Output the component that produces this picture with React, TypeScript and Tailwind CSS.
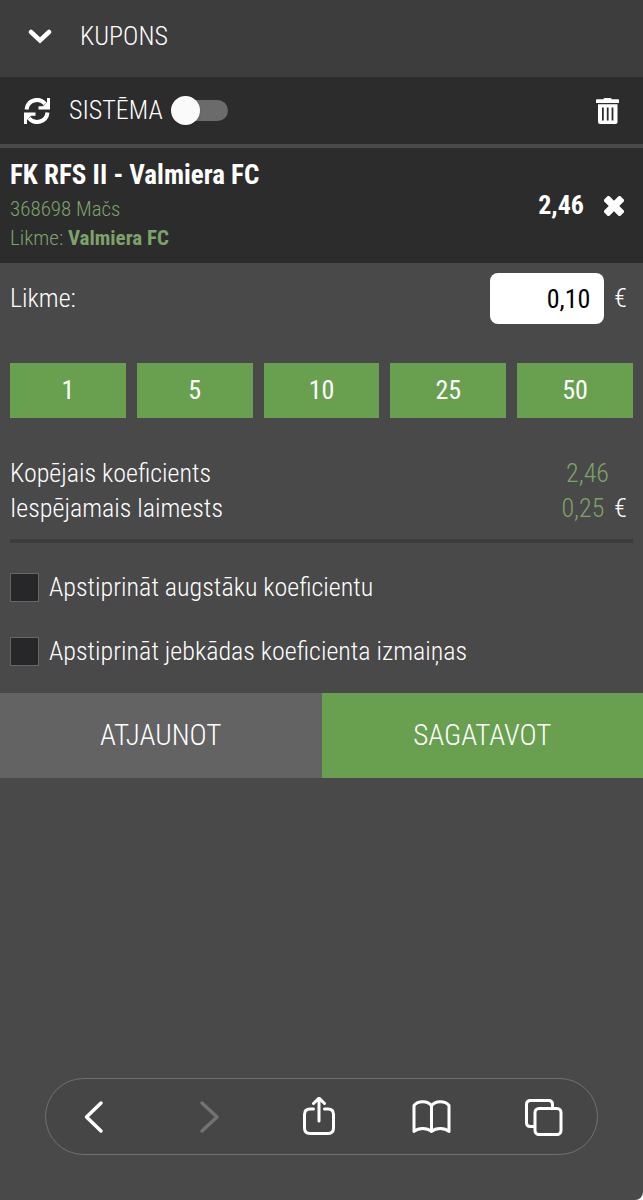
import { useState } from "react"
import type { ReactNode } from "react"

const stakes = [1, 5, 10, 25, 50]

const confirmations = [
  { id: "accept-higher", label: "Apstiprināt augstāku koeficientu" },
  { id: "accept-any", label: "Apstiprināt jebkādas koeficienta izmaiņas" }
]

const RefreshIcon = () => (
  <svg className="h-[26px] w-[26px]" viewBox="0 0 26 26" fill="none" aria-hidden="true">
    <path d="M2.500 11.500A10.500 10.500 0 0 1 21 5.800" stroke="currentColor" strokeWidth="4" />
    <path d="M23.500 14.500A10.500 10.500 0 0 1 5 20.200" stroke="currentColor" strokeWidth="4" />
    <path d="M26 0v11.500H14.500v-3.200h4.300L23 4V0z" fill="currentColor" />
    <path d="M0 26V14.500h11.500v3.200H7.200L3 22v4z" fill="currentColor" />
  </svg>
)

const TrashIcon = () => (
  <svg className="h-[26px] w-[23px]" viewBox="0 0 23 26" fill="none" aria-hidden="true">
    <path d="M7.500 1.200Q7.500 0 8.700 0h5.600q1.200 0 1.200 1.200H22q1 0 1 1V5H0V2.200q0-1 1-1z" fill="currentColor" />
    <path
      fillRule="evenodd"
      d="M2 6.200h19.500V24q0 2-2 2H4q-2 0-2-2zM6 9.500v13h1.800v-13zM10.800 9.500v13h1.800v-13zM15.600 9.500v13h1.800v-13z"
      fill="currentColor"
    />
  </svg>
)

const RemoveIcon = () => (
  <svg className="h-5 w-5" viewBox="0 0 20 20" fill="currentColor" aria-hidden="true">
    <rect x="-1.500" y="6.300" width="23" height="7.400" rx="1.400" transform="rotate(45 10 10)" />
    <rect x="-1.500" y="6.300" width="23" height="7.400" rx="1.400" transform="rotate(-45 10 10)" />
  </svg>
)

type DockButtonProps = {
  label: string
  disabled?: boolean
  extra?: string
  children: ReactNode
}

const DockButton = ({ label, disabled, extra = "", children }: DockButtonProps) => (
  <button
    type="button"
    aria-label={label}
    disabled={disabled}
    className={`flex h-10 w-10 items-center justify-center text-white disabled:text-[#727276] ${extra}`}
  >
    <svg
      className="h-10 w-10 shrink-0"
      viewBox="0 0 40 40"
      fill="none"
      stroke="currentColor"
      strokeWidth="3"
      strokeLinecap="round"
      strokeLinejoin="round"
      aria-hidden="true"
    >
      {children}
    </svg>
  </button>
)

const Dock = () => (
  <nav className="mx-[45px] mb-[45px] flex h-[77px] items-center justify-between rounded-full border border-[#717171] bg-[#464646] pl-7 pr-[34px]">
    <DockButton label="Atpakaļ">
      <path d="M27 6 12.500 20 27 34" strokeWidth="3.500" />
    </DockButton>
    <DockButton label="Uz priekšu" disabled extra="pl-1.5">
      <path d="M13 6l15 14-15 14" strokeWidth="3.500" />
    </DockButton>
    <DockButton label="Kopīgot">
      <path d="M14.500 12H11q-5.500 0-5.500 5.500V31q0 5.500 5.500 5.500h18q5.500 0 5.500-5.500V17.500q0-5.500-5.500-5.500h-3.500" />
      <path d="M20 24V1.500M14.500 6.500 20 1.200l5.500 5.300" />
    </DockButton>
    <DockButton label="Grāmatzīmes">
      <path d="M20.500 9C17 3.500 7 3.500 3 8.500v26c4.500-4 13-4 17.500 0 4.500-4 13-4 17.500 0v-26C34 3.500 24 3.500 20.500 9zM20.500 9v25.500" />
    </DockButton>
    <DockButton label="Cilnes">
      <rect x="12" y="11.500" width="26" height="26" rx="4" />
      <path d="M29.500 11V7.500q0-4-4-4h-18q-4 0-4 4v18q0 4 4 4H11" />
    </DockButton>
  </nav>
)

const App = () => {
  const [stake, setStake] = useState("0,10")

  return (
    <div className="flex min-h-screen flex-col rounded-br-lg bg-[#494949] font-['Roboto_Condensed','Roboto',sans-serif] text-[26px] font-light leading-[35px] text-white">
      <header className="flex h-[77px] items-center bg-[#3d3d3d] pb-1 pl-7">
        <button type="button" aria-label="Aizvērt kuponu" className="flex w-6 justify-center">
          <svg className="h-4 w-6" viewBox="0 0 24 16" fill="none" aria-hidden="true">
            <path d="M3 3l9 8.500L21 3" stroke="currentColor" strokeWidth="4.500" strokeLinecap="round" />
          </svg>
        </button>
        <h1 className="ml-7 font-light">KUPONS</h1>
      </header>

      <div className="flex h-[67px] items-center bg-[#2c2c2c] pl-6 pr-6">
        <button type="button" aria-label="Atsvaidzināt">
          <RefreshIcon />
        </button>
        <label htmlFor="system" className="ml-[19px]">SISTĒMA</label>
        <input
          id="system"
          type="checkbox"
          role="switch"
          className="relative ml-2.5 h-[21px] w-[55px] appearance-none rounded-full bg-[#6b6b6b] before:absolute before:-left-0.5 before:-top-1 before:h-[29px] before:w-[29px] before:rounded-full before:bg-[#fafafa] before:shadow before:content-[''] checked:bg-[#69a050] checked:before:left-7"
        />
        <button type="button" aria-label="Dzēst visu" className="ml-auto">
          <TrashIcon />
        </button>
      </div>

      <section className="mt-1 flex h-[115px] items-center bg-[#2c2c2c] pl-2.5 pr-[19px]">
        <div className="flex-1 pb-1">
          <h2 className="text-[27px] font-bold leading-[40px]">FK RFS II - Valmiera FC</h2>
          <p className="text-[21px] leading-[29px] text-[#7ca36b]">368698 Mačs</p>
          <p className="text-[21px] leading-[29px] text-[#7ca36b]">
            Likme: <b className="font-bold">Valmiera FC</b>
          </p>
        </div>
        <span className="font-bold">2,46</span>
        <button type="button" aria-label="Noņemt" className="ml-5">
          <RemoveIcon />
        </button>
      </section>

      <main className="px-2.5">
        <div className="flex items-center pr-1.5 pt-2.5">
          <label htmlFor="stake" className="flex-1">Likme:</label>
          <input
            id="stake"
            value={stake}
            onChange={(e) => setStake(e.target.value)}
            inputMode="decimal"
            className="h-[51px] w-[114px] rounded-lg bg-white pr-3.5 text-right font-normal text-black"
          />
          <span className="ml-2.5">€</span>
        </div>

        <div className="mt-[39px] grid grid-cols-5 gap-[11px]">
          {stakes.map((value) => (
            <button
              key={value}
              type="button"
              onClick={() => setStake(`${value},00`)}
              className="h-[55px] bg-[#69a050] font-normal"
            >
              {value}
            </button>
          ))}
        </div>

        <dl className="mt-[38px] border-b-4 border-[#3c3c3c] pb-[13px]">
          <div className="flex justify-between pr-6">
            <dt>Kopējais koeficients</dt>
            <dd className="text-[#7ca36b]">2,46</dd>
          </div>
          <div className="flex justify-between pr-1.5">
            <dt>Iespējamais laimests</dt>
            <dd>
              <span className="mr-2.5 text-[#7ca36b]">0,25</span>€
            </dd>
          </div>
        </dl>

        <div className="mt-[27px] flex flex-col gap-[29px]">
          {confirmations.map(({ id, label }) => (
            <div key={id} className="flex items-center">
              <input
                id={id}
                type="checkbox"
                className="h-[29px] w-[29px] appearance-none border border-[#666666] bg-[#272729] checked:bg-[#69a050]"
              />
              <label htmlFor={id} className="ml-2.5">{label}</label>
            </div>
          ))}
        </div>
      </main>

      <div className="mb-auto mt-6 grid grid-cols-2 text-[29px]">
        <button type="button" className="h-[85px] bg-[#636363]">ATJAUNOT</button>
        <button type="button" className="h-[85px] bg-[#69a050]">SAGATAVOT</button>
      </div>

      <Dock />
    </div>
  )
}

export default App
